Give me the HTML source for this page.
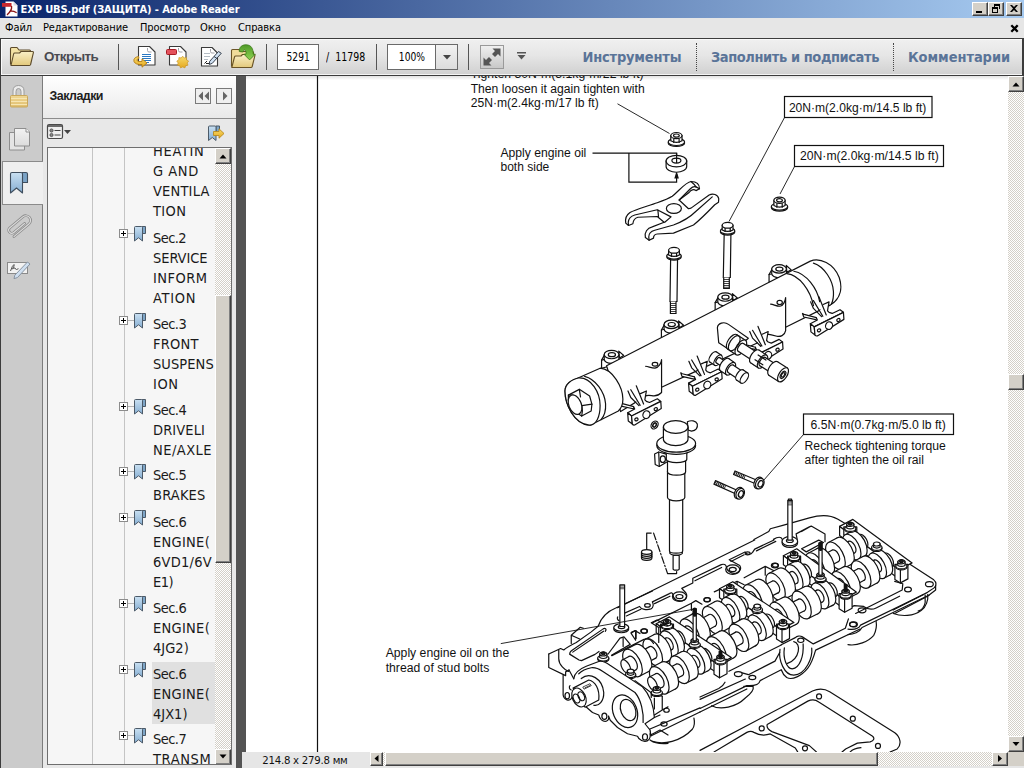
<!DOCTYPE html>
<html lang="ru">
<head>
<meta charset="utf-8">
<title>EXP UBS.pdf (ЗАЩИТА) - Adobe Reader</title>
<style>
*{box-sizing:border-box;margin:0;padding:0}
html,body{width:1024px;height:768px;overflow:hidden;background:#fff}
body{position:relative;font-family:"DejaVu Sans Condensed","Liberation Sans",sans-serif;font-size:11px;color:#000}
.abs{position:absolute}
#title{left:0;top:0;width:1024px;height:18px;background:linear-gradient(90deg,#0a246a,#a6caf0)}
#title .t{left:20.5px;top:1.7px;color:#fff;font-weight:bold;font-size:11px;line-height:16px;white-space:nowrap;letter-spacing:-0.1px}
.wb{top:2px;width:16px;height:14px;background:#d4d0c8;border:1px solid;border-color:#fff #404040 #404040 #fff;box-shadow:inset -1px -1px 0 #808080}
#menu{left:0;top:18px;width:1024px;height:20px;background:#e6e6e6}
#menu span{position:absolute;top:3.3px;line-height:14px;font-size:11px;letter-spacing:-0.1px;white-space:nowrap;color:#000}
#tb{left:0;top:38px;width:1024px;height:38px;background:linear-gradient(#f0f0f0 0%,#e6e6e6 45%,#d0d0d0 100%);border:1px solid #3c3c3c;border-right-width:2px;box-shadow:inset 1px 1px 0 #fafafa,inset 0 -1px 0 #f4f4f4}
.sep{top:44px;width:1px;height:26px;background:#555}
.dsep{top:43px;width:0;height:28px;border-left:1px dotted #444}
.tbtxt{top:46.5px;font-weight:bold;font-size:14.5px;line-height:20px;color:#5a7498;white-space:nowrap}
#strip{left:0;top:76px;width:43px;height:692px;background:#cbcbcb;border-left:1px solid #3c3c3c;border-right:1px solid #7c7c7c}
#seltab{left:2px;top:161px;width:42px;height:44px;background:#efefef;border:1px solid #8a8a8a;border-right:none}
#bmhead{left:43px;top:76px;width:193px;height:42px;background:linear-gradient(#ffffff,#e9e9e9)}
#bmtool{left:43px;top:118px;width:193px;height:650px;background:#e8e8e8;border-top:1px solid #8c8c8c}
#tree{left:47px;top:147px;width:185px;height:618px;background:#f6f6f6;border:1px solid #6e6e6e;overflow:hidden}
#split{left:236px;top:76px;width:10px;height:692px;background:#545454}
#doc{left:246px;top:76px;width:762px;height:676px;background:#fff;overflow:hidden}
#vs{left:1008px;top:76px;width:16px;height:676px}
#status{left:242px;top:752px;width:782px;height:16px;background:#e6e6e6}
.chk{background-image:conic-gradient(#fff 25%,#d4d0c8 0 50%,#fff 0 75%,#d4d0c8 0);background-size:2px 2px}
.b3d{background:#d4d0c8;border:1px solid;border-color:#fff #404040 #404040 #fff;box-shadow:inset -1px -1px 0 #808080}
.bm{position:absolute;left:105px;font-family:"DejaVu Sans Condensed","Liberation Sans",sans-serif;font-size:14.5px;line-height:20px;color:#1a1a1a;white-space:nowrap}
.pdf{font-family:"Liberation Sans",sans-serif;font-size:12px;fill:#111}

#pgbox{left:277px;top:44px;width:42px;height:26px;background:#fff;border:1px solid #6a6a6a;font-size:12.4px;line-height:23px;text-align:center}
#pgtot{left:325.5px;top:44px;font-size:12.4px;line-height:25px;white-space:nowrap}
#zmbox{left:387px;top:44px;width:49px;height:26px;background:#fff;border:1px solid #6a6a6a;border-right:none;font-size:12.4px;line-height:23px;text-align:center}
#zmdrop{left:435px;top:44px;width:23px;height:26px;background:linear-gradient(#f2f2f2,#dcdcdc);border:1px solid #6a6a6a}
#fsbtn{left:480px;top:45px;width:24px;height:24px;background:linear-gradient(#f0f0f0,#c8c8c8);border:1px solid #9a9a9a}
#bmtitle{left:6.5px;top:10.5px;font-family:"Liberation Sans",sans-serif;font-weight:bold;font-size:12.4px;line-height:18px;color:#1e1e1e;letter-spacing:-0.5px}
.nb{top:12px;width:16px;height:16px;border:1px solid #7a7a7a;background:#efefef}
#hl{left:104px;top:514px;width:63px;height:62px;background:#e0e0e0}
#sttxt{left:20.3px;top:2px;font-size:11.3px;line-height:14px;letter-spacing:-0.25px;color:#111;white-space:nowrap}
#hs{left:370px;top:752px;width:638px;height:14px}

.pl{left:71px;width:9px;height:9px;border:1px solid #8c8c8c;background:
 linear-gradient(#000,#000) 1px 3px/5px 1px no-repeat,
 linear-gradient(#000,#000) 3px 1px/1px 5px no-repeat,#fff}
.pl::after{content:"";position:absolute;left:8px;top:3px;width:6px;height:1px;background:#b4b4b4}
.sx{display:inline-block;transform:scaleX(.82);letter-spacing:0}
</style>
</head>
<body>
<!-- title bar -->
<div id="title" class="abs">
  <div class="abs t">EXP UBS.pdf (ЗАЩИТА) - Adobe Reader</div>
  <div class="abs wb" style="left:972px"></div>
  <div class="abs wb" style="left:988px"></div>
  <div class="abs wb" style="left:1006px"></div>
</div>
<!-- menu -->
<div id="menu" class="abs">
  <span style="left:5px">Файл</span>
  <span style="left:43px">Редактирование</span>
  <span style="left:140px">Просмотр</span>
  <span style="left:200px">Окно</span>
  <span style="left:238px">Справка</span>
</div>
<!-- toolbar -->
<div id="tb" class="abs"></div>
<div class="abs sep" style="left:118px"></div>
<div class="abs sep" style="left:266px"></div>
<div class="abs sep" style="left:376px"></div>
<div class="abs sep" style="left:468px"></div>
<div class="abs dsep" style="left:696px"></div>
<div class="abs dsep" style="left:893px"></div>
<div class="abs tbtxt" style="left:44px;top:47px;color:#4a4a50;font-family:'Liberation Sans',sans-serif;font-size:13.4px;letter-spacing:-0.55px">Открыть</div>
<div class="abs" id="pgbox"><span class="sx">5291</span></div>
<div class="abs" id="pgtot"><span class="sx" style="transform-origin:left center;transform:scaleX(.85)">/&nbsp;&nbsp;11798</span></div>
<div class="abs" id="zmbox"><span class="sx">100%</span></div>
<div class="abs" id="zmdrop"></div>
<div class="abs" id="fsbtn"></div>
<div class="abs tbtxt" style="left:582.5px;letter-spacing:-0.2px">Инструменты</div>
<div class="abs tbtxt" style="left:711px;letter-spacing:-0.42px">Заполнить и подписать</div>
<div class="abs tbtxt" style="left:908px;letter-spacing:-0.07px">Комментарии</div>
<!-- left strip -->
<div id="strip" class="abs"></div>
<div id="seltab" class="abs"></div>
<!-- bookmarks -->
<div id="bmhead" class="abs"><div class="abs" id="bmtitle">Закладки</div>
  <div class="abs nb" style="left:152px"></div><div class="abs nb" style="left:173px"></div>
</div>
<div id="bmtool" class="abs"></div>
<div id="tree" class="abs">
  <div class="abs" style="left:44px;top:0;width:1px;height:620px;background:#c4c4c4"></div>
  <div class="abs" style="left:76px;top:0;width:1px;height:620px;background:#c4c4c4"></div>
  <div class="abs" id="hl"></div>
  <div id="items">
<div class="bm" style="top:-6.70px"><span style="letter-spacing:0.68px">HEATIN</span><br><span style="letter-spacing:0.55px">G AND</span><br><span style="letter-spacing:0.18px">VENTILA</span><br><span style="letter-spacing:0.35px">TION</span></div>
<div class="bm" style="top:79.60px"><span style="letter-spacing:-0.59px">Sec.2</span><br><span style="letter-spacing:-0.07px">SERVICE</span><br><span style="letter-spacing:0.47px">INFORM</span><br><span style="letter-spacing:0.72px">ATION</span></div>
<div class="abs pl" style="top:81.2px"></div>
<svg class="abs" style="left:85px;top:77.2px" width="14" height="18" viewBox="0 0 14 18"><use href="#bmk"/></svg>
<div class="bm" style="top:166.00px"><span style="letter-spacing:-0.54px">Sec.3</span><br><span style="letter-spacing:0.24px">FRONT</span><br><span style="letter-spacing:0.07px">SUSPENS</span><br><span style="letter-spacing:0.62px">ION</span></div>
<div class="abs pl" style="top:167.6px"></div>
<svg class="abs" style="left:85px;top:163.6px" width="14" height="18" viewBox="0 0 14 18"><use href="#bmk"/></svg>
<div class="bm" style="top:252.00px"><span style="letter-spacing:-0.54px">Sec.4</span><br><span style="letter-spacing:0.11px">DRIVELI</span><br><span style="letter-spacing:0.46px">NE/AXLE</span></div>
<div class="abs pl" style="top:253.6px"></div>
<svg class="abs" style="left:85px;top:249.6px" width="14" height="18" viewBox="0 0 14 18"><use href="#bmk"/></svg>
<div class="bm" style="top:317.25px"><span style="letter-spacing:-0.54px">Sec.5</span><br><span style="letter-spacing:0.18px">BRAKES</span></div>
<div class="abs pl" style="top:318.9px"></div>
<svg class="abs" style="left:85px;top:314.9px" width="14" height="18" viewBox="0 0 14 18"><use href="#bmk"/></svg>
<div class="bm" style="top:363.50px"><span style="letter-spacing:-0.54px">Sec.6</span><br><span style="letter-spacing:0.28px">ENGINE(</span><br><span style="letter-spacing:0.26px">6VD1/6V</span><br><span style="letter-spacing:-0.55px">E1)</span></div>
<div class="abs pl" style="top:365.1px"></div>
<svg class="abs" style="left:85px;top:361.1px" width="14" height="18" viewBox="0 0 14 18"><use href="#bmk"/></svg>
<div class="bm" style="top:449.75px"><span style="letter-spacing:-0.54px">Sec.6</span><br><span style="letter-spacing:0.28px">ENGINE(</span><br><span style="letter-spacing:0.02px">4JG2)</span></div>
<div class="abs pl" style="top:451.4px"></div>
<svg class="abs" style="left:85px;top:447.4px" width="14" height="18" viewBox="0 0 14 18"><use href="#bmk"/></svg>
<div class="bm" style="top:515.50px"><span style="letter-spacing:-0.54px">Sec.6</span><br><span style="letter-spacing:0.28px">ENGINE(</span><br><span style="letter-spacing:0.01px">4JX1)</span></div>
<div class="abs pl" style="top:517.1px"></div>
<svg class="abs" style="left:85px;top:513.1px" width="14" height="18" viewBox="0 0 14 18"><use href="#bmk"/></svg>
<div class="bm" style="top:581.00px"><span style="letter-spacing:-0.54px">Sec.7</span><br><span style="letter-spacing:0.60px">TRANSM</span></div>
<div class="abs pl" style="top:582.6px"></div>
<svg class="abs" style="left:85px;top:578.6px" width="14" height="18" viewBox="0 0 14 18"><use href="#bmk"/></svg>
</div>
  <div class="abs chk" style="left:167px;top:0;width:16px;height:618px"></div>
  <div class="abs b3d" style="left:167px;top:0;width:16px;height:16px"></div>
  <div class="abs b3d" style="left:167px;top:147px;width:16px;height:268px"></div>
  <div class="abs b3d" style="left:167px;top:601px;width:16px;height:16px"></div>
</div>
<div id="split" class="abs"></div>
<!-- doc -->
<div id="doc" class="abs">
<div class="abs" style="left:0;top:0;width:762px;height:4px;background:linear-gradient(#e2e2e2,#fff)"></div>
<svg class="abs" style="left:0;top:0" width="762" height="676" viewBox="246 76 762 676">
<path d="M317.500 76V752" stroke="#111" stroke-width="1.200"/>
<!--DRAW_START-->
<!-- TEXT + LABELS -->
<g class="pdf">
<text x="470.7" y="78.3" textLength="173" lengthAdjust="spacingAndGlyphs">Tighten 30N·m(3.1kg·m/22 lb ft)</text>
<text x="470.7" y="92.6" textLength="174" lengthAdjust="spacingAndGlyphs">Then loosen it again tighten with</text>
<text x="470.7" y="106.8" textLength="128" lengthAdjust="spacingAndGlyphs">25N·m(2.4kg·m/17 lb ft)</text>
<text x="500.5" y="157" textLength="85.8" lengthAdjust="spacingAndGlyphs">Apply engine oil</text>
<text x="500.5" y="171.3" textLength="48.8" lengthAdjust="spacingAndGlyphs">both side</text>
<text x="788.9" y="112" textLength="137.5" lengthAdjust="spacingAndGlyphs">20N·m(2.0kg·m/14.5 lb ft)</text>
<text x="800" y="160.3" textLength="138.7" lengthAdjust="spacingAndGlyphs">20N·m(2.0kg·m/14.5 lb ft)</text>
<text x="810.5" y="428.5" textLength="135.3" lengthAdjust="spacingAndGlyphs">6.5N·m(0.7kg·m/5.0 lb ft)</text>
<text x="804.6" y="449.6" textLength="141.2" lengthAdjust="spacingAndGlyphs">Recheck tightening torque</text>
<text x="804.6" y="464.1" textLength="119.4" lengthAdjust="spacingAndGlyphs">after tighten the oil rail</text>
<text x="385.7" y="656.9" textLength="123.5" lengthAdjust="spacingAndGlyphs">Apply engine oil on the</text>
<text x="385.7" y="672.1" textLength="103.6" lengthAdjust="spacingAndGlyphs">thread of stud bolts</text>
</g>
<g fill="none" stroke="#111" stroke-width="1.2">
<rect x="784.5" y="96.500" width="147.500" height="21"/>
<rect x="794.5" y="145.500" width="149" height="21"/>
<rect x="803.500" y="414" width="150" height="20.500"/>
<path d="M784.5 117.500L729 221.500M794.5 166.500L780 194M803.500 434.500L763.500 480.500M617.500 103.800L669.500 133.500" stroke-width="0.9"/>
<path d="M592.500 153.100H676.600V162M628.900 153.100V182.100H676.600V174"/>
<path d="M676.600 173l-1.500 5h3z" fill="#111"/>
</g>

<defs>
<g id="fnut" fill="#fff" stroke="#111" stroke-width="1.2">
  <ellipse cx="0" cy="7.300" rx="8.200" ry="3.600"/>
  <ellipse cx="0" cy="6.300" rx="8.200" ry="3.600"/>
  <path d="M-5.600 0V5.200Q0 8.500 5.600 5.200V0z"/>
  <path d="M-2.600 2.900V7.500M2.700 2.900V7.500" fill="none"/>
  <ellipse cx="0" cy="0" rx="5.600" ry="3.100"/>
  <ellipse cx="0" cy="0" rx="2.900" ry="1.600"/>
</g>
<!-- hex flange bolt head, origin = center of top face -->
<g id="bhead" fill="#fff" stroke="#111" stroke-width="1.2">
  <ellipse cx="0" cy="6.600" rx="7.200" ry="3.200"/>
  <ellipse cx="0" cy="5.600" rx="7.200" ry="3.200"/>
  <path d="M-5.400 0V4.600Q0 7.600 5.400 4.600V0z"/>
  <path d="M-2.500 2.700V6.700M2.600 2.700V6.700" fill="none"/>
  <ellipse cx="0" cy="0" rx="5.400" ry="2.900"/>
</g>
</defs>
<!-- nut 1 and washer -->
<use href="#fnut" x="676.400" y="135.600"/>
<g fill="#fff" stroke="#111" stroke-width="1.2">
  <path d="M666.100 161.100v5.400a10.300 5.750 0 0 0 20.600 0v-5.400z"/>
  <ellipse cx="676.400" cy="161.100" rx="10.300" ry="5.750"/>
  <ellipse cx="676.400" cy="160.600" rx="4.500" ry="2.500"/>
  <path d="M676.600 153.100V163" fill="none"/>
</g>
<!-- nut 2 -->
<use href="#fnut" x="779.500" y="200.300"/>
<!-- FORK : tile [616,170] scale 8 -->
<g transform="translate(616 170) scale(.125)" fill="#fff" stroke="#111" stroke-width="9.600" stroke-linejoin="round" stroke-linecap="round">
  <path d="M600 92C640 92 668 110 668 150L640 165C622 150 600 158 585 180L505 240L580 310L600 305L745 200C775 185 815 195 822 230L820 258L790 278C740 330 670 400 620 440L460 505L330 512C305 515 300 535 300 545L265 562L235 540C225 500 250 465 290 455L385 418L330 372L175 378C150 385 138 400 135 430L100 444L78 425C72 390 85 358 112 340C150 318 250 290 330 262C390 240 420 228 450 210C500 170 560 95 600 92Z"/>
  <path d="M668 150L640 135C620 128 605 140 595 150L505 240" fill="none"/>
  <path d="M600 92C610 100 630 115 640 135" fill="none"/>
  <path d="M820 258L795 238C775 225 760 232 745 245L600 305" fill="none" stroke-width="0"/>
  <path d="M100 444L98 420C100 390 120 368 150 360L330 318L440 375L390 418" fill="none"/>
  <path d="M335 320L340 372" fill="none"/>
  <path d="M265 562L262 535C262 510 280 490 310 482L460 440C540 410 600 370 640 330L770 215" fill="none"/>
  <ellipse cx="463" cy="308" rx="60" ry="39"/>
</g>

<!-- BOLTS A,B -->
<g fill="#fff" stroke="#111" stroke-width="1.2">
  <path d="M724.300 228L723.300 277.500H730.300L731 228z"/>
  <path d="M723.700 277.500V288.500H729.300V277.500"/>
  <path d="M723.700 279.500h5.600M723.700 281.500h5.600M723.700 283.500h5.600M723.700 285.500h5.600M723.700 287.300h5.600" stroke-width=".8"/>
  <path d="M670.700 254L670 301.500H677L677.600 254z"/>
  <path d="M670.400 301.500V313.500H676V301.500"/>
  <path d="M670.400 303.500h5.600M670.400 305.500h5.600M670.400 307.500h5.600M670.400 309.500h5.600M670.400 311.500h5.600" stroke-width=".8"/>
</g>
<use href="#bhead" x="727.600" y="225.300"/>
<use href="#bhead" x="674" y="250.300"/>
<!-- RAIL : tile T3 origin (555,310) scale 6.4 -->
<g transform="translate(555 310) scale(.15625)" fill="#fff" stroke="#111" stroke-width="7.700" stroke-linejoin="round" stroke-linecap="round">
  <defs>
    <g id="boss">
      <path d="M-46 4L-64 36V88L40 60V0z"/>
      <path d="M-64 36L-20 26" fill="none"/>
      <path d="M46 -22L78 6L50 22z"/>
      <path d="M-47 0V30A47 27 0 0 0 47 30V0z"/>
      <ellipse cx="0" cy="0" rx="47" ry="27"/>
      <ellipse cx="2" cy="1" rx="23" ry="13"/>
    </g>
    <g id="foot">
      <!-- origin = big hole centre; units T3 (6.4/px) -->
      <path d="M-170 -78L-162 -55L-85 -38L-75 -50L-160 -72z"/>
      <path d="M-38 -135L0 -152L-5 -125L-10 -95L0 -85L20 -78L70 -102L92 -85L-95 8L-120 -12L-75 -36L-82 -52"/>
      <path d="M-100 -160L-40 -60M-65 -185L-18 -68M-118 -152L-100 -110L-48 -58" fill="none"/>
      <path d="M-120 -12L-95 8L-90 60L-116 40z"/>
      <path d="M-95 8L92 -85L95 -40L-75 66Q-85 68 -90 60z"/>
      <ellipse cx="0" cy="0" rx="22" ry="25" transform="rotate(25)"/>
      <ellipse cx="-64" cy="30" rx="11" ry="9" transform="rotate(-25 -64 30)"/>
      <ellipse cx="60" cy="-36" rx="11" ry="9" transform="rotate(-25 60 -36)"/>
    </g>
  </defs>
  <use href="#boss" x="362" y="285"/>
  <use href="#boss" x="745" y="92"/>
  <use href="#boss" x="1089" y="-83"/>
  <use href="#boss" x="1434" y="-263"/>
  <!-- body -->
  <path d="M330 357L1634 -313C1694 -338 1784 -298 1819 -208C1839 -148 1834 -78 1764 -33L1476 110V132C1470 165 1440 172 1420 168C1395 160 1375 155 1359 154L1340 190L866 409L682 494V528C660 550 640 552 620 548C605 545 595 545 585 548L420 650z"/>
  <!-- right end inner arc + band -->
  <path d="M1654 -300C1724 -278 1779 -188 1782 -118C1784 -78 1779 -58 1769 -38" fill="none"/>
  <path d="M1484 -233C1564 -223 1634 -128 1654 -28M1529 -248C1609 -233 1679 -138 1694 -53" fill="none"/>
  <!-- steps + hooks -->
  <path d="M682 494V318C680 340 665 368 640 372C615 372 600 362 580 360" fill="none"/>
  <ellipse cx="640" cy="347" rx="18" ry="12"/>
  <path d="M1476 110V-80C1474 -58 1460 -25 1440 -24C1415 -24 1400 -36 1380 -38" fill="none"/>
  <ellipse cx="1438" cy="-48" rx="17" ry="13"/>
  
  <!-- feet -->
  <use href="#foot" x="585" y="670"/>
  <use href="#foot" x="974.700" y="480"/>
  <use href="#foot" x="1364.300" y="290"/>
  <use href="#foot" x="1754" y="100"/>
</g>
<!-- CAP : tile T4 origin (560,360) scale 10.97 -->
<g transform="translate(560 360) scale(.09115)" fill="#fff" stroke="#111" stroke-width="13.200" stroke-linejoin="round" stroke-linecap="round">
  <path d="M130 228L440 90C580 100 690 300 690 430C690 490 670 530 640 560L330 715C150 700 55 480 55 340C55 290 90 250 130 228z"/>
  <path d="M215 195C120 210 55 270 55 340C55 480 150 700 320 715C400 715 440 620 440 500C440 350 340 195 215 195z"/>
  <path d="M270 180C390 210 490 350 500 480C505 560 490 610 450 655" fill="none"/>
  <path d="M350 142C450 200 520 360 515 480C512 560 495 610 475 642" fill="none" stroke-width="0"/>
  <!-- hex -->
  <path d="M92 385L212 322L325 395L350 485L342 560L238 615L130 545L92 445z"/>
  <path d="M92 385C150 370 215 420 240 500C250 550 245 590 238 615M240 500L350 485M212 322L225 405" fill="none"/>
  <ellipse cx="165" cy="490" rx="68" ry="112" transform="rotate(-22 165 490)"/>
</g>

<g fill="#fff" stroke="#111" stroke-width="1.2" stroke-linejoin="round" stroke-linecap="round">
<path d="M718.75 342.83 L717.38 327.70 C717.77 323.30 723.93 321.05 728.52 324.38 L748.34 338.24 L732.71 351.91 z"/>
<ellipse cx="732.23" cy="341.86" rx="4.30" ry="8.59" transform="rotate(33.0 732.23 341.86)"/><path d="M727.55 349.06L736.15 354.65L745.51 340.23L736.91 334.65z" stroke="none"/><path d="M727.55 349.06L736.15 354.65M736.91 334.65L745.51 340.23" fill="none"/><ellipse cx="740.83" cy="347.44" rx="4.30" ry="8.59" transform="rotate(33.0 740.83 347.44)"/>
<ellipse cx="740.83" cy="347.44" rx="2.34" ry="4.69" transform="rotate(33.0 740.83 347.44)"/><path d="M738.27 351.37L754.24 361.74L759.35 353.88L743.38 343.51z" stroke="none"/><path d="M738.27 351.37L754.24 361.74M743.38 343.51L759.35 353.88" fill="none"/><ellipse cx="756.80" cy="357.81" rx="2.34" ry="4.69" transform="rotate(33.0 756.80 357.81)"/>
<ellipse cx="754.75" cy="356.48" rx="3.81" ry="7.62" transform="rotate(33.0 754.75 356.48)"/><path d="M750.60 362.87L758.38 367.92L766.68 355.15L758.90 350.09z" stroke="none"/><path d="M750.60 362.87L758.38 367.92M758.90 350.09L766.68 355.15" fill="none"/><ellipse cx="762.53" cy="361.53" rx="3.81" ry="7.62" transform="rotate(33.0 762.53 361.53)"/>
<ellipse cx="762.53" cy="361.53" rx="2.44" ry="4.88" transform="rotate(33.0 762.53 361.53)"/><path d="M759.87 365.63L770.52 372.54L775.84 364.35L765.19 357.44z" stroke="none"/><path d="M759.87 365.63L770.52 372.54M765.19 357.44L775.84 364.35" fill="none"/><ellipse cx="773.18" cy="368.45" rx="2.44" ry="4.88" transform="rotate(33.0 773.18 368.45)"/>
<ellipse cx="773.18" cy="368.45" rx="4.00" ry="8.01" transform="rotate(33.0 773.18 368.45)"/><path d="M768.82 375.17L778.64 381.55L787.37 368.12L777.54 361.73z" stroke="none"/><path d="M768.82 375.17L778.64 381.55M777.54 361.73L787.37 368.12" fill="none"/><ellipse cx="783.01" cy="374.83" rx="4.00" ry="8.01" transform="rotate(33.0 783.01 374.83)"/>
<ellipse cx="734.27" cy="343.19" rx="4.30" ry="8.59" transform="rotate(33.0 734.27 343.19)" fill="none"/>
<path d="M758.10 355.00L765.88 360.05" fill="none"/>
<path d="M755.02 359.75L762.80 364.80" fill="none"/>
<ellipse cx="783.01" cy="374.83" rx="2.05" ry="4.10" transform="rotate(33.0 783.01 374.83)"/>
<ellipse cx="783.01" cy="374.83" rx="1.27" ry="2.54" transform="rotate(33.0 783.01 374.83)"/>
<ellipse cx="713.18" cy="356.99" rx="3.03" ry="6.05" transform="rotate(34.0 713.18 356.99)"/><path d="M709.80 362.01L714.66 365.29L721.43 355.25L716.57 351.97z" stroke="none"/><path d="M709.80 362.01L714.66 365.29M716.57 351.97L721.43 355.25" fill="none"/><ellipse cx="718.04" cy="360.27" rx="3.03" ry="6.05" transform="rotate(34.0 718.04 360.27)"/>
<ellipse cx="718.04" cy="360.27" rx="1.56" ry="3.12" transform="rotate(34.0 718.04 360.27)"/><path d="M716.29 362.86L722.77 367.23L726.27 362.05L719.79 357.68z" stroke="none"/><path d="M716.29 362.86L722.77 367.23M719.79 357.68L726.27 362.05" fill="none"/><ellipse cx="724.52" cy="364.64" rx="1.56" ry="3.12" transform="rotate(34.0 724.52 364.64)"/>
<ellipse cx="724.52" cy="364.64" rx="3.66" ry="7.32" transform="rotate(34.0 724.52 364.64)"/><path d="M720.42 370.71L726.49 374.81L734.69 362.66L728.61 358.57z" stroke="none"/><path d="M720.42 370.71L726.49 374.81M728.61 358.57L734.69 362.66" fill="none"/><ellipse cx="730.59" cy="368.73" rx="3.66" ry="7.32" transform="rotate(34.0 730.59 368.73)"/>
<ellipse cx="730.59" cy="368.73" rx="2.20" ry="4.39" transform="rotate(34.0 730.59 368.73)"/><path d="M728.13 372.38L737.44 378.66L742.36 371.37L733.05 365.09z" stroke="none"/><path d="M728.13 372.38L737.44 378.66M733.05 365.09L742.36 371.37" fill="none"/><ellipse cx="739.90" cy="375.01" rx="2.20" ry="4.39" transform="rotate(34.0 739.90 375.01)"/>
<ellipse cx="739.90" cy="375.01" rx="3.03" ry="6.05" transform="rotate(34.0 739.90 375.01)"/><path d="M736.51 380.03L740.97 383.04L747.74 373.00L743.29 369.99z" stroke="none"/><path d="M736.51 380.03L740.97 383.04M743.29 369.99L747.74 373.00" fill="none"/><ellipse cx="744.35" cy="378.02" rx="3.03" ry="6.05" transform="rotate(34.0 744.35 378.02)"/>
</g>
<g fill="#fff" stroke="#111" stroke-width="1.2" stroke-linejoin="round" stroke-linecap="round">
<path d="M673.100 555.500V569A3.050 1.200 0 0 0 679.200 569V555.500z"/>
<path d="M669.900 551V553.500A6.400 2.200 0 0 0 682.300 553.500V551z" />
<path d="M669.500 499V551A6.600 2.200 0 0 0 682.700 551V499z"/>
<path d="M667.500 471V497.600A8.650 3.200 0 0 0 684.800 497.600V471z"/>
<path d="M667.500 458V472.100A9.050 3 0 0 0 685.600 472.100V458z"/>
<path d="M654.600 454L658.700 452L667 454.300L669.400 460.400L659.300 466.500L655.200 464.500z"/><path d="M658.700 452L659.300 466.500" fill="none"/><ellipse cx="662.8" cy="459.2" rx="2.6" ry="3.3"/>
<path d="M666.300 450V459.200A10.250 3.500 0 0 0 686.800 459.200V450z"/>
<path d="M687.400 421.700C691 420 696 420.500 697.300 424C698 428 696 430.500 691.500 431.100L688 430z"/>
<ellipse cx="676.2" cy="445.6" rx="19.4" ry="8.8"/><ellipse cx="676.2" cy="443.4" rx="19.4" ry="8.8"/>
<path d="M663.400 427V439.300A12.300 6.400 0 0 0 688 439.300V427z"/><ellipse cx="675.7" cy="427" rx="12.3" ry="6.4"/>
<path d="M646.700 533.100V551M646.700 533.100H651.200" fill="none"/>
<path d="M653.600 533.100L667.500 573.400" fill="none" stroke-dasharray="7 2 1.5 2"/>
<path d="M667.500 573.600H676.600V571.500" fill="none"/>
<path d="M641.500 552V558A5.200 2.300 0 0 0 651.900 558V552z"/><ellipse cx="646.7" cy="552" rx="5.2" ry="2.3"/>
<path d="M641.500 554A5.200 2.300 0 0 0 651.900 554M641.500 556A5.200 2.300 0 0 0 651.900 556" fill="none"/>
<ellipse cx="654.6" cy="425" rx="3.2" ry="4.2" transform="rotate(35 654.6 425)"/><ellipse cx="654.6" cy="425" rx="1.5" ry="2.2" transform="rotate(35 654.6 425)" stroke-width="1.6"/>
<path d="M733.56 474.45L759.06 485.25L760.54 481.75L735.04 470.95z"/><path d="M734.30 472.70L745.01 477.24" stroke="#222" stroke-width="3.6" stroke-dasharray="1.1 0.7" stroke-linecap="butt"/><ellipse cx="758.42" cy="482.92" rx="4.2" ry="6" transform="rotate(23.0 758.42 482.92)"/><ellipse cx="759.80" cy="483.50" rx="4" ry="5.6" transform="rotate(23.0 759.80 483.50)"/><ellipse cx="760.54" cy="483.81" rx="2.3" ry="3.4" transform="rotate(23.0 760.54 483.81)" stroke-width="1.3"/>
<path d="M713.93 484.14L739.43 495.44L740.97 491.96L715.47 480.66z"/><path d="M714.70 482.40L725.41 487.15" stroke="#222" stroke-width="3.6" stroke-dasharray="1.1 0.7" stroke-linecap="butt"/><ellipse cx="738.83" cy="493.09" rx="4.2" ry="6" transform="rotate(23.9 738.83 493.09)"/><ellipse cx="740.20" cy="493.70" rx="4" ry="5.6" transform="rotate(23.9 740.20 493.70)"/><ellipse cx="740.93" cy="494.02" rx="2.3" ry="3.4" transform="rotate(23.9 740.93 494.02)" stroke-width="1.3"/>
</g>
<!-- HEAD rim / outline traces (drawn before cams) -->
<!-- TJ origin (600,540) scale 5.689 -->
<g transform="translate(600 540) scale(.17578)" fill="none" stroke="#111" stroke-width="6.900" stroke-linejoin="round" stroke-linecap="round">
  <path d="M880 0L100 385"/>
  <path id="rimJ" d="M130 420L225 378C235 395 265 400 290 392C305 385 305 365 298 352L395 305C405 298 412 300 415 310C415 335 440 352 470 345C495 338 498 315 488 300L465 275L528 245V218L690 140C705 135 715 140 718 150C720 175 745 195 775 188C800 180 805 160 795 145L735 112L825 68C835 85 860 85 868 70L880 52L990 0"/>
  <path d="M150 432L232 394M310 362L398 320M540 232L692 156M745 122L820 84M890 62L1000 8"/>
  <ellipse cx="270" cy="372" rx="16" ry="10"/>
  <ellipse cx="452" cy="322" rx="40" ry="27"/><ellipse cx="452" cy="322" rx="20" ry="12"/>
  <ellipse cx="755" cy="168" rx="40" ry="27"/><ellipse cx="755" cy="168" rx="20" ry="12"/>
  <ellipse cx="840" cy="76" rx="14" ry="9"/>
  <ellipse cx="610" cy="340" rx="18" ry="12"/>
  <ellipse cx="995" cy="145" rx="20" ry="13"/>
  <ellipse cx="250" cy="518" rx="18" ry="12"/>
  <!-- carrier walls -->
  <path d="M300 470L520 360L545 345L580 365M520 360V400M330 490V560M650 295L780 235L820 255M780 235V290M820 215L940 150L990 175M940 150V200M178 525L205 515V560"/>
</g>
<!-- T13 origin (700,480) scale 6.4 : rear right outer edge -->
<g transform="translate(700 480) scale(.15625)" fill="none" stroke="#111" stroke-width="7.700" stroke-linejoin="round" stroke-linecap="round">
  <path d="M345 381L440 330L450 312L530 290L700 242C760 225 830 220 880 250L1024 335"/>
  <path d="M470 380L490 370C515 360 530 372 528 392"/>
  <path d="M622 380L615 345L700 300L712 295L800 345V395M712 295L650 330"/>
  <path d="M650 440L760 385L790 400L680 460z"/>
  <!-- stud base C -->
  <ellipse cx="575" cy="402" rx="50" ry="30" fill="#fff"/><ellipse cx="575" cy="392" rx="50" ry="30" fill="#fff"/><ellipse cx="575" cy="388" rx="22" ry="12"/>
  <path d="M562 130V385H590V130z" fill="#fff"/>
  <path d="M565 135h22M565 147h22M565 159h22" stroke-width="5"/>
  <path d="M566 122h20v10h-20z" fill="#fff"/>
  <ellipse cx="482" cy="545" rx="18" ry="12"/>
</g>
<!-- T16' origin (840,490) scale 6.4 -->
<g transform="translate(840 490) scale(.15625)" fill="none" stroke="#111" stroke-width="7.700" stroke-linejoin="round" stroke-linecap="round">
  <path d="M440 470L600 575C618 590 620 612 600 628L560 655L340 768"/>
  <path d="M612 610V640L560 680L350 790M545 672V720C540 750 520 768 500 775"/>
  <path d="M350 585L402 600L398 640L100 790"/>
  <ellipse cx="572" cy="603" rx="25" ry="16"/><ellipse cx="435" cy="637" rx="22" ry="15"/>
</g>
<!-- T17' origin (848,590) scale 6.4 -->
<g transform="translate(848 590) scale(.15625)" fill="none" stroke="#111" stroke-width="7.700" stroke-linejoin="round" stroke-linecap="round">
  <path d="M480 30L80 225C70 245 40 255 0 250"/>
  <path d="M520 32L90 240C75 270 35 285 0 285"/>
  <path d="M330 40L180 115C150 130 120 120 100 105L40 100L0 120"/>
  <ellipse cx="90" cy="130" rx="25" ry="16"/><ellipse cx="35" cy="220" rx="25" ry="16"/>
  <path d="M290 150C340 170 420 170 470 130C500 110 515 60 510 30"/>
  <path d="M0 350C60 360 130 330 165 290C180 260 185 230 180 200"/>
</g>
<!-- T14 origin (700,590) scale 6.4 -->
<g transform="translate(700 590) scale(.15625)" fill="none" stroke="#111" stroke-width="7.700" stroke-linejoin="round" stroke-linecap="round">
  <path d="M1024 250L740 385C730 420 715 470 690 500C650 550 590 580 555 560C535 545 525 525 520 510L385 580C380 600 350 615 300 612L0 758"/>
  <path d="M950 185L930 245L725 345L655 300C640 290 620 295 610 305L520 350"/>
  <path d="M512 380C500 450 540 545 600 545C680 540 722 430 715 372"/>
  <path d="M540 370C530 440 555 500 590 505C640 500 665 420 660 345"/>
  <path d="M600 330C650 340 640 440 560 470"/>
  <path d="M270 530L310 542L480 455L510 400M185 520L520 352M0 700L290 570"/>
  <ellipse cx="245" cy="538" rx="25" ry="16"/><ellipse cx="335" cy="560" rx="22" ry="14"/>
  <ellipse cx="645" cy="322" rx="20" ry="14"/><ellipse cx="980" cy="220" rx="22" ry="14"/><ellipse cx="45" cy="62" rx="20" ry="13"/>
  <path d="M160 590C150 610 140 620 120 630L0 685"/>
</g>
<!-- T12 origin (540,648) scale 6.4 : front rim left part -->
<g transform="translate(540 648) scale(.15625)" fill="none" stroke="#111" stroke-width="7.700" stroke-linejoin="round" stroke-linecap="round">
  <path d="M700 520L1024 383M712 562L1024 410M700 520L712 562"/>
  <path d="M720 598C790 620 900 600 975 520C990 500 990 470 985 448"/>
</g>
<!-- T15 origin (700,648) scale 6.4 -->
<g transform="translate(700 648) scale(.15625)" fill="none" stroke="#111" stroke-width="7.700" stroke-linejoin="round" stroke-linecap="round">
  <path d="M0 410L300 262"/>
  <path d="M75 369C130 400 230 380 290 320C330 290 345 262 340 245L280 245"/>
  <path d="M0 655L720 275C760 258 800 262 830 280L1246.700 542C1284 571 1292 617 1262 646L1216 666"/>
  <path d="M90 665L300 540C320 530 330 530 345 540C380 560 420 560 450 550L610 640L625 665"/>
  <path d="M909 666L932 646L1007 609L1089 601C1112 594 1120 579 1104.600 564.500L760 345C740 330 720 325 690 340L430 490C425 510 440 525 460 535L700 625L745 665"/>
  <ellipse cx="762" cy="310" rx="16" ry="16"/><ellipse cx="395" cy="515" rx="16" ry="16"/><ellipse cx="978" cy="452" rx="16" ry="16"/><ellipse cx="672" cy="642" rx="16" ry="16"/><ellipse cx="1139" cy="627" rx="16" ry="16"/>
  <path d="M960 666C975 650 1000 640 1030 638"/>
</g>
<!-- far right gasket continuation: T [848,590]: line at bottom-left (0,735)->(50,768) -->


<g fill="#fff" stroke="#111" stroke-width="1.2" stroke-linejoin="round" stroke-linecap="round">
<path d="M839.6 526.4L898.8 569.8L912.1 562.9L852.9 519.4z"/><path d="M839.6 526.4L898.8 569.8L898.8 578.8L839.6 535.4z"/><ellipse cx="856.9" cy="548.3" rx="6" ry="8" transform="rotate(34 856.9 548.3)"/><ellipse cx="882.4" cy="567.0" rx="6" ry="8" transform="rotate(34 882.4 567.0)"/><path d="M894.9 564.4V579.4L900.4 582.9L907.9 578.9V564.4z"/><path d="M900.4 567.4V582.9" fill="none"/><path d="M843.8 526.9V534.9L849.3 538.4L856.8 534.4V526.9z"/><path d="M849.3 529.9V538.4" fill="none"/>
<ellipse cx="862.99" cy="541.12" rx="3.90" ry="7.50" transform="rotate(152.0 862.99 541.12)"/><path d="M859.47 534.50L854.41 537.19L861.45 550.43L866.51 547.74z" stroke="none"/><path d="M859.47 534.50L854.41 537.19M866.51 547.74L861.45 550.43" fill="none"/><ellipse cx="857.93" cy="543.81" rx="3.90" ry="7.50" transform="rotate(152.0 857.93 543.81)"/><ellipse cx="857.93" cy="543.81" rx="7.28" ry="14.00" transform="rotate(152.0 857.93 543.81)"/><path d="M851.36 531.44L845.17 534.73L858.31 559.46L864.50 556.17z" stroke="none"/><path d="M851.36 531.44L845.17 534.73M864.50 556.17L858.31 559.46" fill="none"/><ellipse cx="851.74" cy="547.10" rx="7.28" ry="14.00" transform="rotate(152.0 851.74 547.10)"/><ellipse cx="851.74" cy="547.10" rx="3.38" ry="6.50" transform="rotate(152.0 851.74 547.10)"/><path d="M848.69 541.36L841.38 545.24L847.48 556.72L854.79 552.84z" stroke="none"/><path d="M848.69 541.36L841.38 545.24M854.79 552.84L847.48 556.72" fill="none"/><ellipse cx="844.43" cy="550.98" rx="3.38" ry="6.50" transform="rotate(152.0 844.43 550.98)"/><ellipse cx="844.43" cy="550.98" rx="7.80" ry="15.00" transform="rotate(152.0 844.43 550.98)"/><path d="M837.39 537.73L828.39 542.51L842.47 569.01L851.47 564.23z" stroke="none"/><path d="M837.39 537.73L828.39 542.51M851.47 564.23L842.47 569.01" fill="none"/><ellipse cx="835.43" cy="555.76" rx="7.80" ry="15.00" transform="rotate(152.0 835.43 555.76)"/><ellipse cx="835.43" cy="555.76" rx="3.38" ry="6.50" transform="rotate(152.0 835.43 555.76)"/><path d="M832.38 550.02L821.69 555.70L827.79 567.18L838.48 561.50z" stroke="none"/><path d="M832.38 550.02L821.69 555.70M838.48 561.50L827.79 567.18" fill="none"/><ellipse cx="824.74" cy="561.44" rx="3.38" ry="6.50" transform="rotate(152.0 824.74 561.44)"/><ellipse cx="824.74" cy="561.44" rx="7.80" ry="15.00" transform="rotate(152.0 824.74 561.44)"/><path d="M817.70 548.19L808.14 553.27L822.22 579.77L831.78 574.69z" stroke="none"/><path d="M817.70 548.19L808.14 553.27M831.78 574.69L822.22 579.77" fill="none"/><ellipse cx="815.18" cy="566.52" rx="7.80" ry="15.00" transform="rotate(152.0 815.18 566.52)"/><ellipse cx="815.18" cy="566.52" rx="3.90" ry="7.50" transform="rotate(152.0 815.18 566.52)"/><path d="M811.66 559.90L804.91 563.48L811.95 576.73L818.70 573.14z" stroke="none"/><path d="M811.66 559.90L804.91 563.48M818.70 573.14L811.95 576.73" fill="none"/><ellipse cx="808.43" cy="570.11" rx="3.90" ry="7.50" transform="rotate(152.0 808.43 570.11)"/>
<ellipse cx="888.54" cy="559.87" rx="3.90" ry="7.50" transform="rotate(151.9 888.54 559.87)"/><path d="M885.01 553.25L879.97 555.94L887.03 569.18L892.07 566.49z" stroke="none"/><path d="M885.01 553.25L879.97 555.94M892.07 566.49L887.03 569.18" fill="none"/><ellipse cx="883.50" cy="562.56" rx="3.90" ry="7.50" transform="rotate(151.9 883.50 562.56)"/><ellipse cx="883.50" cy="562.56" rx="7.28" ry="14.00" transform="rotate(151.9 883.50 562.56)"/><path d="M876.91 550.21L870.75 553.49L883.93 578.20L890.09 574.91z" stroke="none"/><path d="M876.91 550.21L870.75 553.49M890.09 574.91L883.93 578.20" fill="none"/><ellipse cx="877.34" cy="565.85" rx="7.28" ry="14.00" transform="rotate(151.9 877.34 565.85)"/><ellipse cx="877.34" cy="565.85" rx="3.38" ry="6.50" transform="rotate(151.9 877.34 565.85)"/><path d="M874.28 560.11L867.00 564.00L873.11 575.47L880.40 571.58z" stroke="none"/><path d="M874.28 560.11L867.00 564.00M880.40 571.58L873.11 575.47" fill="none"/><ellipse cx="870.05" cy="569.73" rx="3.38" ry="6.50" transform="rotate(151.9 870.05 569.73)"/><ellipse cx="870.05" cy="569.73" rx="7.80" ry="15.00" transform="rotate(151.9 870.05 569.73)"/><path d="M862.99 556.50L854.03 561.28L868.15 587.75L877.11 582.96z" stroke="none"/><path d="M862.99 556.50L854.03 561.28M877.11 582.96L868.15 587.75" fill="none"/><ellipse cx="861.09" cy="574.51" rx="7.80" ry="15.00" transform="rotate(151.9 861.09 574.51)"/><ellipse cx="861.09" cy="574.51" rx="3.38" ry="6.50" transform="rotate(151.9 861.09 574.51)"/><path d="M858.03 568.78L847.39 574.45L853.51 585.92L864.15 580.25z" stroke="none"/><path d="M858.03 568.78L847.39 574.45M864.15 580.25L853.51 585.92" fill="none"/><ellipse cx="850.45" cy="580.19" rx="3.38" ry="6.50" transform="rotate(151.9 850.45 580.19)"/><ellipse cx="850.45" cy="580.19" rx="7.80" ry="15.00" transform="rotate(151.9 850.45 580.19)"/><path d="M843.39 566.95L833.87 572.03L847.99 598.50L857.51 593.42z" stroke="none"/><path d="M843.39 566.95L833.87 572.03M857.51 593.42L847.99 598.50" fill="none"/><ellipse cx="840.93" cy="585.27" rx="7.80" ry="15.00" transform="rotate(151.9 840.93 585.27)"/><ellipse cx="840.93" cy="585.27" rx="3.90" ry="7.50" transform="rotate(151.9 840.93 585.27)"/><path d="M837.40 578.65L830.67 582.24L837.74 595.47L844.46 591.89z" stroke="none"/><path d="M837.40 578.65L830.67 582.24M844.46 591.89L837.74 595.47" fill="none"/><ellipse cx="834.20" cy="588.85" rx="3.90" ry="7.50" transform="rotate(151.9 834.20 588.85)"/>
<path d="M783.4 555.7L843.0 599.1L856.3 592.1L796.7 548.8z"/><path d="M783.4 555.7L843.0 599.1L843.0 608.1L783.4 564.7z"/><ellipse cx="800.7" cy="578.2" rx="6" ry="8" transform="rotate(34 800.7 578.2)"/><ellipse cx="826.4" cy="596.9" rx="6" ry="8" transform="rotate(34 826.4 596.9)"/><path d="M839.1 593.7V608.7L844.6 612.2L852.1 608.2V593.7z"/><path d="M844.6 596.7V612.2" fill="none"/><path d="M787.6 556.2V564.2L793.1 567.7L800.6 563.7V556.2z"/><path d="M793.1 559.2V567.7" fill="none"/>
<ellipse cx="806.67" cy="571.03" rx="3.90" ry="7.50" transform="rotate(153.1 806.67 571.03)"/><path d="M803.27 564.34L797.56 567.24L804.35 580.61L810.06 577.71z" stroke="none"/><path d="M803.27 564.34L797.56 567.24M810.06 577.71L804.35 580.61" fill="none"/><ellipse cx="800.95" cy="573.93" rx="3.90" ry="7.50" transform="rotate(153.1 800.95 573.93)"/><ellipse cx="800.95" cy="573.93" rx="7.28" ry="14.00" transform="rotate(153.1 800.95 573.93)"/><path d="M794.62 561.44L787.63 564.99L800.30 589.96L807.29 586.41z" stroke="none"/><path d="M794.62 561.44L787.63 564.99M807.29 586.41L800.30 589.96" fill="none"/><ellipse cx="793.97" cy="577.47" rx="7.28" ry="14.00" transform="rotate(153.1 793.97 577.47)"/><ellipse cx="793.97" cy="577.47" rx="3.38" ry="6.50" transform="rotate(153.1 793.97 577.47)"/><path d="M791.02 571.67L782.77 575.86L788.65 587.46L796.91 583.27z" stroke="none"/><path d="M791.02 571.67L782.77 575.86M796.91 583.27L788.65 587.46" fill="none"/><ellipse cx="785.71" cy="581.66" rx="3.38" ry="6.50" transform="rotate(153.1 785.71 581.66)"/><ellipse cx="785.71" cy="581.66" rx="7.80" ry="15.00" transform="rotate(153.1 785.71 581.66)"/><path d="M778.92 568.28L768.76 573.44L782.33 600.19L792.50 595.04z" stroke="none"/><path d="M778.92 568.28L768.76 573.44M792.50 595.04L782.33 600.19" fill="none"/><ellipse cx="775.55" cy="586.82" rx="7.80" ry="15.00" transform="rotate(153.1 775.55 586.82)"/><ellipse cx="775.55" cy="586.82" rx="3.38" ry="6.50" transform="rotate(153.1 775.55 586.82)"/><path d="M772.60 581.02L760.54 587.14L766.42 598.74L778.49 592.61z" stroke="none"/><path d="M772.60 581.02L760.54 587.14M778.49 592.61L766.42 598.74" fill="none"/><ellipse cx="763.48" cy="592.94" rx="3.38" ry="6.50" transform="rotate(153.1 763.48 592.94)"/><ellipse cx="763.48" cy="592.94" rx="7.80" ry="15.00" transform="rotate(153.1 763.48 592.94)"/><path d="M756.69 579.56L745.89 585.04L759.47 611.79L770.27 606.32z" stroke="none"/><path d="M756.69 579.56L745.89 585.04M770.27 606.32L759.47 611.79" fill="none"/><ellipse cx="752.68" cy="598.42" rx="7.80" ry="15.00" transform="rotate(153.1 752.68 598.42)"/><ellipse cx="752.68" cy="598.42" rx="3.90" ry="7.50" transform="rotate(153.1 752.68 598.42)"/><path d="M749.29 591.73L741.67 595.60L748.45 608.97L756.07 605.11z" stroke="none"/><path d="M749.29 591.73L741.67 595.60M756.07 605.11L748.45 608.97" fill="none"/><ellipse cx="745.06" cy="602.28" rx="3.90" ry="7.50" transform="rotate(153.1 745.06 602.28)"/>
<ellipse cx="832.46" cy="589.76" rx="3.90" ry="7.50" transform="rotate(153.7 832.46 589.76)"/><path d="M829.14 583.04L823.47 585.83L830.11 599.28L835.77 596.49z" stroke="none"/><path d="M829.14 583.04L823.47 585.83M835.77 596.49L830.11 599.28" fill="none"/><ellipse cx="826.79" cy="592.56" rx="3.90" ry="7.50" transform="rotate(153.7 826.79 592.56)"/><ellipse cx="826.79" cy="592.56" rx="7.28" ry="14.00" transform="rotate(153.7 826.79 592.56)"/><path d="M820.60 580.00L813.67 583.42L826.06 608.53L832.99 605.11z" stroke="none"/><path d="M820.60 580.00L813.67 583.42M832.99 605.11L826.06 608.53" fill="none"/><ellipse cx="819.87" cy="595.97" rx="7.28" ry="14.00" transform="rotate(153.7 819.87 595.97)"/><ellipse cx="819.87" cy="595.97" rx="3.38" ry="6.50" transform="rotate(153.7 819.87 595.97)"/><path d="M816.99 590.15L808.81 594.18L814.57 605.84L822.75 601.80z" stroke="none"/><path d="M816.99 590.15L808.81 594.18M822.75 601.80L814.57 605.84" fill="none"/><ellipse cx="811.69" cy="600.01" rx="3.38" ry="6.50" transform="rotate(153.7 811.69 600.01)"/><ellipse cx="811.69" cy="600.01" rx="7.80" ry="15.00" transform="rotate(153.7 811.69 600.01)"/><path d="M805.05 586.56L794.98 591.53L808.26 618.43L818.33 613.46z" stroke="none"/><path d="M805.05 586.56L794.98 591.53M818.33 613.46L808.26 618.43" fill="none"/><ellipse cx="801.62" cy="604.98" rx="7.80" ry="15.00" transform="rotate(153.7 801.62 604.98)"/><ellipse cx="801.62" cy="604.98" rx="3.38" ry="6.50" transform="rotate(153.7 801.62 604.98)"/><path d="M798.74 599.15L786.79 605.05L792.54 616.71L804.50 610.81z" stroke="none"/><path d="M798.74 599.15L786.79 605.05M804.50 610.81L792.54 616.71" fill="none"/><ellipse cx="789.66" cy="610.88" rx="3.38" ry="6.50" transform="rotate(153.7 789.66 610.88)"/><ellipse cx="789.66" cy="610.88" rx="7.80" ry="15.00" transform="rotate(153.7 789.66 610.88)"/><path d="M783.03 597.43L772.33 602.71L785.60 629.61L796.30 624.33z" stroke="none"/><path d="M783.03 597.43L772.33 602.71M796.30 624.33L785.60 629.61" fill="none"/><ellipse cx="778.97" cy="616.16" rx="7.80" ry="15.00" transform="rotate(153.7 778.97 616.16)"/><ellipse cx="778.97" cy="616.16" rx="3.90" ry="7.50" transform="rotate(153.7 778.97 616.16)"/><path d="M775.65 609.43L768.09 613.16L774.73 626.61L782.28 622.89z" stroke="none"/><path d="M775.65 609.43L768.09 613.16M782.28 622.89L774.73 626.61" fill="none"/><ellipse cx="771.41" cy="619.89" rx="3.90" ry="7.50" transform="rotate(153.7 771.41 619.89)"/>
<path d="M719.5 588.7L780.6 629.4L793.9 622.4L732.8 581.7z"/><path d="M719.5 588.7L780.6 629.4L780.6 638.4L719.5 597.7z"/><ellipse cx="737.1" cy="610.4" rx="6" ry="8" transform="rotate(34 737.1 610.4)"/><ellipse cx="763.5" cy="628.0" rx="6" ry="8" transform="rotate(34 763.5 628.0)"/><path d="M776.5 624.1V639.1L782.0 642.6L789.5 638.6V624.1z"/><path d="M782.0 627.1V642.6" fill="none"/><path d="M723.8 589.0V597.0L729.3 600.5L736.8 596.5V589.0z"/><path d="M729.3 592.0V600.5" fill="none"/>
<ellipse cx="743.16" cy="603.27" rx="3.90" ry="7.50" transform="rotate(151.2 743.16 603.27)"/><path d="M739.55 596.70L733.88 599.81L741.11 612.96L746.77 609.85z" stroke="none"/><path d="M739.55 596.70L733.88 599.81M746.77 609.85L741.11 612.96" fill="none"/><ellipse cx="737.50" cy="606.39" rx="3.90" ry="7.50" transform="rotate(151.2 737.50 606.39)"/><ellipse cx="737.50" cy="606.39" rx="7.28" ry="14.00" transform="rotate(151.2 737.50 606.39)"/><path d="M730.75 594.12L723.83 597.92L737.31 622.46L744.24 618.66z" stroke="none"/><path d="M730.75 594.12L723.83 597.92M744.24 618.66L737.31 622.46" fill="none"/><ellipse cx="730.57" cy="610.19" rx="7.28" ry="14.00" transform="rotate(151.2 730.57 610.19)"/><ellipse cx="730.57" cy="610.19" rx="3.38" ry="6.50" transform="rotate(151.2 730.57 610.19)"/><path d="M727.44 604.49L719.26 608.99L725.52 620.38L733.70 615.89z" stroke="none"/><path d="M727.44 604.49L719.26 608.99M733.70 615.89L725.52 620.38" fill="none"/><ellipse cx="722.39" cy="614.68" rx="3.38" ry="6.50" transform="rotate(151.2 722.39 614.68)"/><ellipse cx="722.39" cy="614.68" rx="7.80" ry="15.00" transform="rotate(151.2 722.39 614.68)"/><path d="M715.17 601.54L705.10 607.07L719.55 633.36L729.61 627.83z" stroke="none"/><path d="M715.17 601.54L705.10 607.07M729.61 627.83L719.55 633.36" fill="none"/><ellipse cx="712.32" cy="620.21" rx="7.80" ry="15.00" transform="rotate(151.2 712.32 620.21)"/><ellipse cx="712.32" cy="620.21" rx="3.38" ry="6.50" transform="rotate(151.2 712.32 620.21)"/><path d="M709.19 614.52L697.24 621.09L703.50 632.48L715.45 625.91z" stroke="none"/><path d="M709.19 614.52L697.24 621.09M715.45 625.91L703.50 632.48" fill="none"/><ellipse cx="700.37" cy="626.78" rx="3.38" ry="6.50" transform="rotate(151.2 700.37 626.78)"/><ellipse cx="700.37" cy="626.78" rx="7.80" ry="15.00" transform="rotate(151.2 700.37 626.78)"/><path d="M693.15 613.64L682.45 619.51L696.89 645.81L707.59 639.93z" stroke="none"/><path d="M693.15 613.64L682.45 619.51M707.59 639.93L696.89 645.81" fill="none"/><ellipse cx="689.67" cy="632.66" rx="7.80" ry="15.00" transform="rotate(151.2 689.67 632.66)"/><ellipse cx="689.67" cy="632.66" rx="3.90" ry="7.50" transform="rotate(151.2 689.67 632.66)"/><path d="M686.06 626.09L678.51 630.23L685.73 643.38L693.28 639.23z" stroke="none"/><path d="M686.06 626.09L678.51 630.23M693.28 639.23L685.73 643.38" fill="none"/><ellipse cx="682.12" cy="636.81" rx="3.90" ry="7.50" transform="rotate(151.2 682.12 636.81)"/>
<ellipse cx="769.53" cy="620.85" rx="3.90" ry="7.50" transform="rotate(151.1 769.53 620.85)"/><path d="M765.90 614.29L760.27 617.40L767.52 630.53L773.16 627.42z" stroke="none"/><path d="M765.90 614.29L760.27 617.40M773.16 627.42L767.52 630.53" fill="none"/><ellipse cx="763.90" cy="623.96" rx="3.90" ry="7.50" transform="rotate(151.1 763.90 623.96)"/><ellipse cx="763.90" cy="623.96" rx="7.28" ry="14.00" transform="rotate(151.1 763.90 623.96)"/><path d="M757.13 611.71L750.24 615.51L763.78 640.02L770.67 636.22z" stroke="none"/><path d="M757.13 611.71L750.24 615.51M770.67 636.22L763.78 640.02" fill="none"/><ellipse cx="757.01" cy="627.77" rx="7.28" ry="14.00" transform="rotate(151.1 757.01 627.77)"/><ellipse cx="757.01" cy="627.77" rx="3.38" ry="6.50" transform="rotate(151.1 757.01 627.77)"/><path d="M753.87 622.08L745.74 626.57L752.02 637.95L760.16 633.46z" stroke="none"/><path d="M753.87 622.08L745.74 626.57M760.16 633.46L752.02 637.95" fill="none"/><ellipse cx="748.88" cy="632.26" rx="3.38" ry="6.50" transform="rotate(151.1 748.88 632.26)"/><ellipse cx="748.88" cy="632.26" rx="7.80" ry="15.00" transform="rotate(151.1 748.88 632.26)"/><path d="M741.63 619.13L731.61 624.66L746.12 650.92L756.13 645.39z" stroke="none"/><path d="M741.63 619.13L731.61 624.66M756.13 645.39L746.12 650.92" fill="none"/><ellipse cx="738.87" cy="637.79" rx="7.80" ry="15.00" transform="rotate(151.1 738.87 637.79)"/><ellipse cx="738.87" cy="637.79" rx="3.38" ry="6.50" transform="rotate(151.1 738.87 637.79)"/><path d="M735.72 632.10L723.83 638.67L730.12 650.05L742.01 643.48z" stroke="none"/><path d="M735.72 632.10L723.83 638.67M742.01 643.48L730.12 650.05" fill="none"/><ellipse cx="726.98" cy="644.36" rx="3.38" ry="6.50" transform="rotate(151.1 726.98 644.36)"/><ellipse cx="726.98" cy="644.36" rx="7.80" ry="15.00" transform="rotate(151.1 726.98 644.36)"/><path d="M719.72 631.23L709.09 637.11L723.59 663.37L734.23 657.49z" stroke="none"/><path d="M719.72 631.23L709.09 637.11M734.23 657.49L723.59 663.37" fill="none"/><ellipse cx="716.34" cy="650.24" rx="7.80" ry="15.00" transform="rotate(151.1 716.34 650.24)"/><ellipse cx="716.34" cy="650.24" rx="3.90" ry="7.50" transform="rotate(151.1 716.34 650.24)"/><path d="M712.71 643.67L705.20 647.82L712.46 660.95L719.97 656.80z" stroke="none"/><path d="M712.71 643.67L705.20 647.82M719.97 656.80L712.46 660.95" fill="none"/><ellipse cx="708.83" cy="654.39" rx="3.90" ry="7.50" transform="rotate(151.1 708.83 654.39)"/>
<path d="M656.2 623.8L718.0 664.5L731.3 657.6L669.5 616.9z"/><path d="M656.2 623.8L718.0 664.5L718.0 673.5L656.2 632.8z"/><ellipse cx="674.2" cy="645.0" rx="6" ry="8" transform="rotate(34 674.2 645.0)"/><ellipse cx="700.9" cy="662.5" rx="6" ry="8" transform="rotate(34 700.9 662.5)"/><path d="M714.0 659.3V674.3L719.5 677.8L727.0 673.8V659.3z"/><path d="M719.5 662.3V677.8" fill="none"/><path d="M660.5 624.1V632.1L666.0 635.6L673.5 631.6V624.1z"/><path d="M666.0 627.1V635.6" fill="none"/>
<ellipse cx="680.30" cy="637.80" rx="3.90" ry="7.50" transform="rotate(152.2 680.30 637.80)"/><path d="M676.79 631.16L671.73 633.84L678.74 647.10L683.80 644.43z" stroke="none"/><path d="M676.79 631.16L671.73 633.84M683.80 644.43L678.74 647.10" fill="none"/><ellipse cx="675.24" cy="640.47" rx="3.90" ry="7.50" transform="rotate(152.2 675.24 640.47)"/><ellipse cx="675.24" cy="640.47" rx="7.28" ry="14.00" transform="rotate(152.2 675.24 640.47)"/><path d="M668.70 628.09L662.51 631.36L675.59 656.12L681.77 652.85z" stroke="none"/><path d="M668.70 628.09L662.51 631.36M681.77 652.85L675.59 656.12" fill="none"/><ellipse cx="669.05" cy="643.74" rx="7.28" ry="14.00" transform="rotate(152.2 669.05 643.74)"/><ellipse cx="669.05" cy="643.74" rx="3.38" ry="6.50" transform="rotate(152.2 669.05 643.74)"/><path d="M666.01 637.99L658.70 641.85L664.77 653.35L672.08 649.48z" stroke="none"/><path d="M666.01 637.99L658.70 641.85M672.08 649.48L664.77 653.35" fill="none"/><ellipse cx="661.74" cy="647.60" rx="3.38" ry="6.50" transform="rotate(152.2 661.74 647.60)"/><ellipse cx="661.74" cy="647.60" rx="7.80" ry="15.00" transform="rotate(152.2 661.74 647.60)"/><path d="M654.73 634.33L645.73 639.09L659.74 665.61L668.74 660.86z" stroke="none"/><path d="M654.73 634.33L645.73 639.09M668.74 660.86L659.74 665.61" fill="none"/><ellipse cx="652.74" cy="652.35" rx="7.80" ry="15.00" transform="rotate(152.2 652.74 652.35)"/><ellipse cx="652.74" cy="652.35" rx="3.38" ry="6.50" transform="rotate(152.2 652.74 652.35)"/><path d="M649.70 646.60L639.02 652.24L645.09 663.74L655.77 658.10z" stroke="none"/><path d="M649.70 646.60L639.02 652.24M655.77 658.10L645.09 663.74" fill="none"/><ellipse cx="642.05" cy="657.99" rx="3.38" ry="6.50" transform="rotate(152.2 642.05 657.99)"/><ellipse cx="642.05" cy="657.99" rx="7.80" ry="15.00" transform="rotate(152.2 642.05 657.99)"/><path d="M635.05 644.73L625.49 649.78L639.50 676.31L649.06 671.26z" stroke="none"/><path d="M635.05 644.73L625.49 649.78M649.06 671.26L639.50 676.31" fill="none"/><ellipse cx="632.49" cy="663.04" rx="7.80" ry="15.00" transform="rotate(152.2 632.49 663.04)"/><ellipse cx="632.49" cy="663.04" rx="3.90" ry="7.50" transform="rotate(152.2 632.49 663.04)"/><path d="M628.99 656.41L622.24 659.97L629.25 673.24L636.00 669.67z" stroke="none"/><path d="M628.99 656.41L622.24 659.97M636.00 669.67L629.25 673.24" fill="none"/><ellipse cx="625.74" cy="666.61" rx="3.90" ry="7.50" transform="rotate(152.2 625.74 666.61)"/>
<ellipse cx="707.02" cy="655.37" rx="3.90" ry="7.50" transform="rotate(152.4 707.02 655.37)"/><path d="M703.54 648.73L698.48 651.37L705.43 664.66L710.49 662.02z" stroke="none"/><path d="M703.54 648.73L698.48 651.37M710.49 662.02L705.43 664.66" fill="none"/><ellipse cx="701.96" cy="658.02" rx="3.90" ry="7.50" transform="rotate(152.4 701.96 658.02)"/><ellipse cx="701.96" cy="658.02" rx="7.28" ry="14.00" transform="rotate(152.4 701.96 658.02)"/><path d="M695.47 645.61L689.28 648.85L702.26 673.66L708.45 670.42z" stroke="none"/><path d="M695.47 645.61L689.28 648.85M708.45 670.42L702.26 673.66" fill="none"/><ellipse cx="695.77" cy="661.25" rx="7.28" ry="14.00" transform="rotate(152.4 695.77 661.25)"/><ellipse cx="695.77" cy="661.25" rx="3.38" ry="6.50" transform="rotate(152.4 695.77 661.25)"/><path d="M692.76 655.49L685.45 659.32L691.48 670.84L698.79 667.01z" stroke="none"/><path d="M692.76 655.49L685.45 659.32M698.79 667.01L691.48 670.84" fill="none"/><ellipse cx="688.47" cy="665.08" rx="3.38" ry="6.50" transform="rotate(152.4 688.47 665.08)"/><ellipse cx="688.47" cy="665.08" rx="7.80" ry="15.00" transform="rotate(152.4 688.47 665.08)"/><path d="M681.51 651.79L672.52 656.49L686.43 683.07L695.42 678.37z" stroke="none"/><path d="M681.51 651.79L672.52 656.49M695.42 678.37L686.43 683.07" fill="none"/><ellipse cx="679.47" cy="669.78" rx="7.80" ry="15.00" transform="rotate(152.4 679.47 669.78)"/><ellipse cx="679.47" cy="669.78" rx="3.38" ry="6.50" transform="rotate(152.4 679.47 669.78)"/><path d="M676.46 664.02L665.78 669.61L671.80 681.13L682.48 675.54z" stroke="none"/><path d="M676.46 664.02L665.78 669.61M682.48 675.54L671.80 681.13" fill="none"/><ellipse cx="668.79" cy="675.37" rx="3.38" ry="6.50" transform="rotate(152.4 668.79 675.37)"/><ellipse cx="668.79" cy="675.37" rx="7.80" ry="15.00" transform="rotate(152.4 668.79 675.37)"/><path d="M661.84 662.08L652.28 667.08L666.19 693.66L675.75 688.66z" stroke="none"/><path d="M661.84 662.08L652.28 667.08M675.75 688.66L666.19 693.66" fill="none"/><ellipse cx="659.24" cy="680.37" rx="7.80" ry="15.00" transform="rotate(152.4 659.24 680.37)"/><ellipse cx="659.24" cy="680.37" rx="3.90" ry="7.50" transform="rotate(152.4 659.24 680.37)"/><path d="M655.76 673.73L649.01 677.26L655.97 690.55L662.71 687.02z" stroke="none"/><path d="M655.76 673.73L649.01 677.26M662.71 687.02L655.97 690.55" fill="none"/><ellipse cx="652.49" cy="683.90" rx="3.90" ry="7.50" transform="rotate(152.4 652.49 683.90)"/>
</g>
<use href="#snut" x="667.0" y="623.1"/>
<use href="#snut" x="694.7" y="641.9"/>
<use href="#snut" x="720.5" y="658.3"/>
<use href="#snut" x="730.3" y="588.0"/>
<use href="#cnut" x="757.3" y="607.9"/>
<use href="#snut" x="783.0" y="623.1"/>
<use href="#snut" x="794.1" y="555.2"/>
<use href="#snut" x="820.5" y="576.2"/>
<use href="#snut" x="845.6" y="592.7"/>
<use href="#snut" x="850.3" y="525.9"/>
<use href="#cnut" x="876.8" y="545.8"/>
<use href="#snut" x="901.4" y="563.4"/>
<path d="M693.1 640.9V608.9H696.3V640.9z" fill="#fff" stroke="#111" stroke-width="1.2"/><path d="M694.7 609.4V614.9" stroke="#111" stroke-width="3.8" stroke-linecap="round"/>
<path d="M818.9 575.2V543.2H822.1V575.2z" fill="#fff" stroke="#111" stroke-width="1.2"/><path d="M820.5 543.7V549.2" stroke="#111" stroke-width="3.8" stroke-linecap="round"/>
<path d="M719.2 657.3V651.3H721.8V657.3z" fill="#fff" stroke="#111" stroke-width="1.2"/><path d="M720.5 651.8V657.3" stroke="#111" stroke-width="3.2" stroke-linecap="round"/>
<path d="M844.3 591.7V584.7H846.9V591.7z" fill="#fff" stroke="#111" stroke-width="1.2"/><path d="M845.6 585.2V590.7" stroke="#111" stroke-width="3.2" stroke-linecap="round"/>
<!-- HEAD part 1: tile T11b origin (540,590) scale 8 -->
<defs>
<g id="snut" fill="#fff" stroke="#111" stroke-width="1.2">
  <ellipse cx="0" cy="3.600" rx="5.600" ry="2.900"/>
  <ellipse cx="0" cy="2.600" rx="5.600" ry="2.900"/>
  <path d="M-3.600 -1.500V2Q0 4 3.600 2V-1.500z"/>
  <ellipse cx="0" cy="-1.500" rx="3.600" ry="2"/>
  <ellipse cx="0" cy="-2.200" rx="1.900" ry="1.500" fill="#222"/>
</g>
<g id="cnut" fill="#fff" stroke="#111" stroke-width="1.2">
  <ellipse cx="0" cy="2.800" rx="5.200" ry="2.900"/>
  <ellipse cx="0" cy="1.600" rx="5.200" ry="2.900"/>
  <path d="M-3.300 -1.800V1.300Q0 3.300 3.300 1.300V-1.800z"/>
  <ellipse cx="0" cy="-1.800" rx="3.300" ry="2"/>
</g>
</defs>
<g transform="translate(540 590) scale(.125)" fill="none" stroke="#111" stroke-width="9.600" stroke-linejoin="round" stroke-linecap="round">
  <!-- left block -->
  <path d="M70 512L165 468L190 480C200 470 250 440 290 420L410 335L465 290C490 215 540 170 610 142L900 8"/>
  <path d="M70 512V620L205 685V655L232 640"/>
  <path d="M150 478V550C150 600 200 640 228 652"/>
  <path d="M250 428V362L322 298L347 306M250 362L318 392"/>
  <!-- slot -->
  <path d="M240 515C232 500 245 490 260 480L500 315C520 300 538 312 522 330"/>
  <path d="M262 497L508 330"/>
  <path d="M240 515L312 560L332 565L440 515L472 492"/>
  <!-- stud base L1 -->
  <ellipse cx="650" cy="312" rx="60" ry="30" fill="#fff"/>
  <ellipse cx="650" cy="300" rx="60" ry="30" fill="#fff"/>
  <ellipse cx="652" cy="296" rx="26" ry="13"/>
  <path d="M639 -42V292H677V-42z" fill="#fff"/>
  <path d="M642 -34h32M642 -22h32M642 -10h32" stroke-width="6"/>
  <!-- rim inner near stud -->
  <path d="M622 215C615 225 620 240 632 246"/>
  <!-- carrier details -->
  <ellipse cx="835" cy="328" rx="25" ry="18"/>
  <path d="M728 345L760 325L800 348M765 335V395M728 345L765 402M665 385V452"/>
  <path d="M545 512L640 385L672 375L722 435L572 522"/>
  <path d="M575 525L832 395C862 385 892 400 908 428"/>
  <path d="M890 262L935 240L1024 285M890 262L950 300V420M950 300L1024 262"/>
</g>
<use href="#snut" x="603.300" y="655.500"/>
<use href="#cnut" x="630.600" y="673"/>
<path d="M500.800 643.600L695 609" stroke="#111" stroke-width="0.9" fill="none"/>

<!-- HEAD part 2: front cover, tile T12b origin (540,660) scale 8 -->
<g transform="translate(540 660) scale(.125)" fill="none" stroke="#111" stroke-width="9.600" stroke-linejoin="round" stroke-linecap="round">
  <path d="M270 150C275 100 320 70 370 50L470 12C500 4 530 20 560 42L820 215C880 280 910 380 915 460L840 510L880 560L880 590L862 645L780 610L700 590L620 540L562 482L470 440L420 420L365 372L300 330z" fill="#fff" stroke="none"/>
  <!-- ear left -->
  <path d="M185 120V280C190 318 238 338 256 300"/>
  <ellipse cx="218" cy="285" rx="18" ry="25"/>
  <path d="M232 80L270 150"/>
  <!-- cover outline -->
  <path d="M270 150C275 100 320 70 370 50L470 12C500 4 530 20 560 42L820 215C880 280 910 380 915 460L840 510L880 560L885 600"/>
  <path d="M310 110C340 80 380 68 410 62C440 58 470 70 500 90L760 260C810 320 830 420 825 500" />
  <path d="M365 372L420 420L470 440C478 470 500 496 530 490C548 482 552 462 548 448L562 482L620 540L700 590L780 610C790 640 830 660 862 645C880 630 885 610 880 590"/>
  <ellipse cx="515" cy="450" rx="20" ry="25"/>
  <ellipse cx="840" cy="615" rx="20" ry="25"/>
  <!-- boss behind shaft -->
  <path d="M330 148C400 90 500 150 510 260C512 330 470 372 430 362"/>
  <!-- shaft end -->
  <path d="M265 225L390 160C440 170 480 230 470 320L360 378z" fill="#fff"/>
  <ellipse cx="312" cy="300" rx="52" ry="80" transform="rotate(-25 312 300)" fill="#fff"/>
  <ellipse cx="330" cy="290" rx="24" ry="38" transform="rotate(-25 330 290)"/>
  <ellipse cx="292" cy="308" rx="24" ry="38" transform="rotate(-25 292 308)"/>
  <path d="M345 215L400 190L410 205L355 232zM360 222l40-18" stroke-width="6"/>
  <path d="M240 205C230 215 235 235 250 240"/>
  <!-- big round boss -->
  <ellipse cx="680" cy="410" rx="95" ry="135" transform="rotate(-22 680 410)"/>
  <ellipse cx="705" cy="400" rx="58" ry="88" transform="rotate(-22 705 400)"/>
  <!-- cap block under nut2 -->
  <path d="M890 262V300M915 305V392M978 290V400L915 440M978 400L1024 375"/>
  <path d="M760 165L890 262L978 290" />
  <!-- right-bottom holes -->
  <ellipse cx="1012" cy="402" rx="22" ry="16"/>
  <ellipse cx="992" cy="512" rx="25" ry="17"/>
  <path d="M915 460L960 440M885 600L960 560L1024 600M880 640C920 670 980 672 1024 668"/>
</g>
<use href="#snut" x="656.800" y="690"/>

<!--DRAW_END-->
</svg>
</div>
<div id="vs" class="abs chk">
  <div class="abs b3d" style="left:0;top:0;width:16px;height:16px"></div>
  <div class="abs b3d" style="left:0;top:298px;width:16px;height:16px"></div>
  <div class="abs b3d" style="left:0;top:660px;width:16px;height:16px"></div>
</div>
<div id="status" class="abs"><div class="abs" id="sttxt">214.8 x 279.8 мм</div></div>
<div id="hs" class="abs chk">
  <div class="abs b3d" style="left:0;top:0;width:13px;height:14px"></div>
  <div class="abs b3d" style="left:15px;top:0;width:493px;height:14px"></div>
  <div class="abs b3d" style="left:622px;top:0;width:16px;height:14px"></div>
</div>
<div class="abs" style="left:1008px;top:752px;width:16px;height:14px;background:#d4d0c8"></div>
<svg id="ico" class="abs" style="left:0;top:0" width="1024" height="768" viewBox="0 0 1024 768">
<defs>
<linearGradient id="gbm" x1="0" y1="0" x2="0" y2="1"><stop offset="0" stop-color="#c9e0f2"/><stop offset="1" stop-color="#86aed2"/></linearGradient>
<linearGradient id="gfold" x1="0" y1="0" x2="0" y2="1"><stop offset="0" stop-color="#f6e9b4"/><stop offset="1" stop-color="#e2c777"/></linearGradient>
<symbol id="bmk" viewBox="0 0 14 18"><path d="M9 1.5h3.5v7H9z" fill="#7ea6c8" stroke="#4c5a68" stroke-width="1"/><path d="M1.5 2.5q0-1 1-1h6q1 0 1 1V16l-4-3.2-4 3.2z" fill="url(#gbm)" stroke="#4c5a68" stroke-width="1" stroke-linejoin="round"/></symbol>
</defs>
<!--ICONS_START-->
<!-- title pdf icon -->
<g>
<path d="M5.5 1.5h8l4 4v11h-12z" fill="#fff"/>
<path d="M13.5 1.5v4h4z" fill="#d8d8e0"/>
<rect x="2" y="3" width="9.5" height="3.8" fill="#c8282e"/>
<path d="M11.6 6.5c.3 2.5-1.6 5.6-4.2 8M9.8 11.4c2-.6 4.2-.2 6.4 1.1" fill="none" stroke="#8c1414" stroke-width="1.3" stroke-linecap="round"/>
</g>
<!-- window buttons glyphs -->
<g fill="#000">
<rect x="976" y="11" width="6" height="2"/>
<path d="M994 4h6v5h-1v-3h-4v1h-1zM992 7h6v6h-6zm1 2v3h4v-3z" fill-rule="evenodd"/>
<path d="M1010 5h2l2 2 2-2h2l-3 3.5 3 3.500h-2l-2-2-2 2h-2l3-3.500z"/>
<path d="M1011.300 25.300L1017.700 31.700M1017.700 25.300L1011.300 31.700" stroke="#000" stroke-width="2.300" fill="none"/>
</g>
<!-- open folder -->
<defs>
<linearGradient id="gfo" x1="0" y1="0" x2="0" y2="1"><stop offset="0" stop-color="#f9efc6"/><stop offset="1" stop-color="#e3c97c"/></linearGradient>
<linearGradient id="ggr" x1="0" y1="0" x2="0" y2="1"><stop offset="0" stop-color="#4f9a28"/><stop offset="1" stop-color="#8fd352"/></linearGradient>
<linearGradient id="gyl" x1="0" y1="0" x2="0" y2="1"><stop offset="0" stop-color="#f8dc6c"/><stop offset="1" stop-color="#e5a920"/></linearGradient>
<linearGradient id="glk" x1="0" y1="0" x2="0" y2="1"><stop offset="0" stop-color="#f0d795"/><stop offset="1" stop-color="#e0bf6e"/></linearGradient>
<linearGradient id="gpg" x1="0" y1="0" x2="0" y2="1"><stop offset="0" stop-color="#f2f2f2"/><stop offset="1" stop-color="#dcdcdc"/></linearGradient>
</defs>
<g stroke="#5c4a2a" stroke-width="1.1" stroke-linejoin="round">
<path d="M10.500 64.500v-16q0-1 1-1h5.500l2 2.500h10.500q1 0 1 1v3" fill="#f3e2a4"/>
<path d="M11 65.500l2.600-11.500q.2-1 1.200-1h4.700l1.500-1.500h11.500q1.200 0 .9 1.200l-2.800 11.800q-.2 1-1.200 1h-17.400q-1.200 0-1-1z" fill="url(#gfo)"/>
</g>
<!-- icon1: export page w/ arrow -->
<g>
<path d="M138.500 46.500h11l5.500 5.500v13h-16.500z" fill="#fff" stroke="#3a3a3a" stroke-width="1.100" stroke-linejoin="round"/>
<path d="M147.500 48v2.500q0 1.500 1.500 1.500h2.500" fill="none" stroke="#9a9aa4" stroke-width=".9"/>
<path d="M142 54.500h9M142 56.500h9M142 58.500h9M142 60.500h9M146 62.500h3" stroke="#2a78c2" stroke-width="1"/>
<path d="M138.500 56.500q-5.500 1-4.500 5 1.500 3.500 8 3v2.700l5-4.200-5-4.200v2.700q-4 .5-5-1 -.5-1.500 2-2.300z" fill="url(#gyl)" stroke="#b27a14" stroke-width=".9" stroke-linejoin="round"/>
</g>
<!-- icon2: create pdf -->
<g>
<path d="M169.500 46.500h11l5.500 5.500v13h-16.500z" fill="#fff" stroke="#3a3a3a" stroke-width="1.100" stroke-linejoin="round"/>
<path d="M178.500 48v2.500q0 1.500 1.500 1.500h2.500" fill="none" stroke="#9a9aa4" stroke-width=".9"/>
<rect x="166.500" y="49.500" width="10" height="5" rx="1" fill="#e4525c" stroke="#a81c24" stroke-width="1"/>
<path d="M182.700 56.200l1.500 1.800 2.300-.4.100 2.300 2 1.200-1.400 1.900.8 2.200-2.300.5-.8 2.200-2.200-1-2.200 1-.8-2.200-2.300-.5.800-2.200-1.400-1.900 2-1.200.100-2.300 2.300.4z" fill="url(#gyl)" stroke="#c8962a" stroke-width=".7" stroke-linejoin="round"/>
</g>
<!-- icon3: sign page -->
<g>
<path d="M201.500 47.500h10.500l5.500 5.500v13h-16z" fill="#fff" stroke="#3a3a3a" stroke-width="1.100" stroke-linejoin="round"/>
<path d="M210.500 49v2.500q0 1.500 1.500 1.500h2.500" fill="none" stroke="#9a9aa4" stroke-width=".9"/>
<path d="M204 53.500h6M204 56.500h6M204 59.500h4" stroke="#b4bcc4" stroke-width="1"/>
<path d="M204.500 63.500l2.500-2.500M206 63.500h4" stroke="#222" stroke-width="1" fill="none"/>
<path d="M218.500 51.500l2.800 1.800-9 10-3 1.200.4-3.200z" fill="#cfe0f2" stroke="#39424e" stroke-width="1" stroke-linejoin="round"/>
<path d="M214 56.500l3 2" stroke="#39424e" stroke-width="1"/>
</g>
<!-- icon4: folder with green arrow -->
<g>
<g stroke="#6a5426" stroke-width="1.100" stroke-linejoin="round">
<path d="M231.500 66.500v-16q0-1 1-1h6.500l2 2h11.500q1 0 1 1v4" fill="#f0dc9a"/>
<path d="M231.800 67.500l2.700-10.500q.3-1 1.300-1h5.200l1.500-1.500h11.500q1.200 0 .9 1.200l-2.700 10.800q-.3 1-1.300 1h-18.100q-1.200 0-1-1z" fill="url(#gfo)"/>
</g>
<path d="M239.300 51.500C239 46.500 242.500 44.800 246 44.800C251.500 44.800 253.300 49 253.200 54.200L255.300 54.200L249.600 59.900L243.900 54.200L246 54.200C246.200 51.500 245.600 50 244.500 50C243.500 50 243.100 50.800 243.100 52Z" fill="url(#ggr)" stroke="#3c7a1a" stroke-width=".8" stroke-linejoin="round"/>
</g>
<!-- zoom dropdown arrow, fullscreen, small menu -->
<path d="M443 55h8l-4 4.500z" fill="#444"/>
<g fill="#555">
<path d="M492.500 48.500h8v8l-2.500-2.500-3 3-3-3 3-3z"/>
<path d="M491.500 65.500h-8v-8l2.500 2.500 3-3 3 3-3 3z"/>
</g>
<path d="M517 52h9v1.500h-9zM517.500 55h8l-4 4.500z" fill="#555"/>
<!-- lock -->
<g>
<path d="M13 96v-5q0-5.500 5.500-5.500 5.500 0 5.500 5.500v5h-3v-4.500q0-3-2.500-3-2.500 0-2.500 3v4.500z" fill="#ececec" stroke="#9c9c9c" stroke-width="1"/>
<rect x="10.500" y="95.500" width="17" height="11.500" rx="1" fill="url(#glk)" stroke="#c8a75c" stroke-width="1"/>
<path d="M11 98.500h16M11 101.500h16M11 104.500h16" stroke="#f6e6b4" stroke-width="1"/>
</g>
<!-- pages -->
<g stroke="#8e8e8e" stroke-width="1" stroke-linejoin="round">
<path d="M9.500 132.500h15v17.500h-15z" fill="#e4e4e4"/>
<path d="M14.500 128.500h11.500l3.500 3.500v14h-15z" fill="url(#gpg)"/>
<path d="M26 128.500v3.500h3.500" fill="#fafafa"/>
</g>
<!-- bookmark tab icon -->
<g stroke="#3f4e5e" stroke-width="1.1" stroke-linejoin="round">
<path d="M22 172.500h4q1.500 0 1.500 1.500v8.500h-5.500z" fill="#7ba3c6"/>
<path d="M10.500 174q0-1.500 1.500-1.500h9q1.500 0 1.500 1.500v19l-6-5-6 5z" fill="url(#gbm)"/>
</g>
<!-- paperclip -->
<g fill="none" stroke-linecap="round" transform="translate(19.300 225.800) rotate(-40)">
<path d="M5.500 1.600H-8.500A3.100 3.100 0 0 1 -8.500 -4.600H8.500A4.700 4.700 0 0 1 8.500 4.800H-11" stroke="#8a8a8a" stroke-width="2.700"/>
<path d="M5.500 1.600H-8.500A3.100 3.100 0 0 1 -8.500 -4.600H8.500A4.700 4.700 0 0 1 8.500 4.800H-11" stroke="#dcdcdc" stroke-width="1.100"/>
</g>
<!-- sign icon -->
<g>
<rect x="7.500" y="262.500" width="20" height="11" fill="#f2f2f2" stroke="#8a8a8a" stroke-width="1"/>
<path d="M10.500 271q2-6 3.500-6.500 1 .5-1.500 4.500 1.500-1.500 2.500-1 .5 1.500 1.500 1.500l2-.8" fill="none" stroke="#555" stroke-width="1"/>
<path d="M27.500 262l2.500 2-12.500 13.500-3.500 1.200.8-3.500z" fill="#cfdff0" stroke="#8894a2" stroke-width="1" stroke-linejoin="round"/>
</g>
<!-- bookmarks nav buttons glyphs -->
<g fill="#666">
<path d="M203 91.500v9l-4.500-4.500zM209 91.500v9l-4.500-4.500z"/>
<path d="M223 91.500v9l4.500-4.500z"/>
</g>
<!-- options icon -->
<g>
<rect x="47.500" y="124.500" width="15" height="14" rx="1.500" fill="#f0f0f0" stroke="#4a4a4a" stroke-width="1.200"/>
<path d="M48 126h14" stroke="#4a4a4a" stroke-width="1.600"/>
<circle cx="51.500" cy="130.500" r="1.600" fill="#888" stroke="#444" stroke-width=".8"/>
<circle cx="51.500" cy="135" r="1.600" fill="#888" stroke="#444" stroke-width=".8"/>
<path d="M54.500 130.500h6M54.500 135h6" stroke="#444" stroke-width="1.200"/>
<path d="M64 130h7l-3.500 4z" fill="#444"/>
</g>
<!-- bookmark + arrow icon -->
<g>
<path d="M216 126h3.500v7H216z" fill="#7ea6c8" stroke="#4c5a68" stroke-width="1"/>
<path d="M208.500 127q0-1 1-1h5.500q1 0 1 1v13.500l-3.700-3-3.800 3z" fill="url(#gbm)" stroke="#4c5a68" stroke-width="1" stroke-linejoin="round"/>
<path d="M213.500 131.500h5.500v-2.700l5 4.700-5 4.700v-2.700h-5.500z" fill="url(#gyl)" stroke="#b98a1e" stroke-width=".9" stroke-linejoin="round"/>
</g>
<!-- scroll arrows -->
<g fill="#000">
<path d="M219.500 158.500h7l-3.500-4z"/>
<path d="M219.500 754.500h7l-3.500 4z"/>
<path d="M1012.500 86.500h7l-3.500-4z"/>
<path d="M1012.500 742h7l-3.500 4z"/>
<path d="M378.500 755v7l-4-3.500z"/>
<path d="M998 755v7l4-3.500z"/>
</g>

<!--ICONS_END-->
</svg>
</body>
</html>
